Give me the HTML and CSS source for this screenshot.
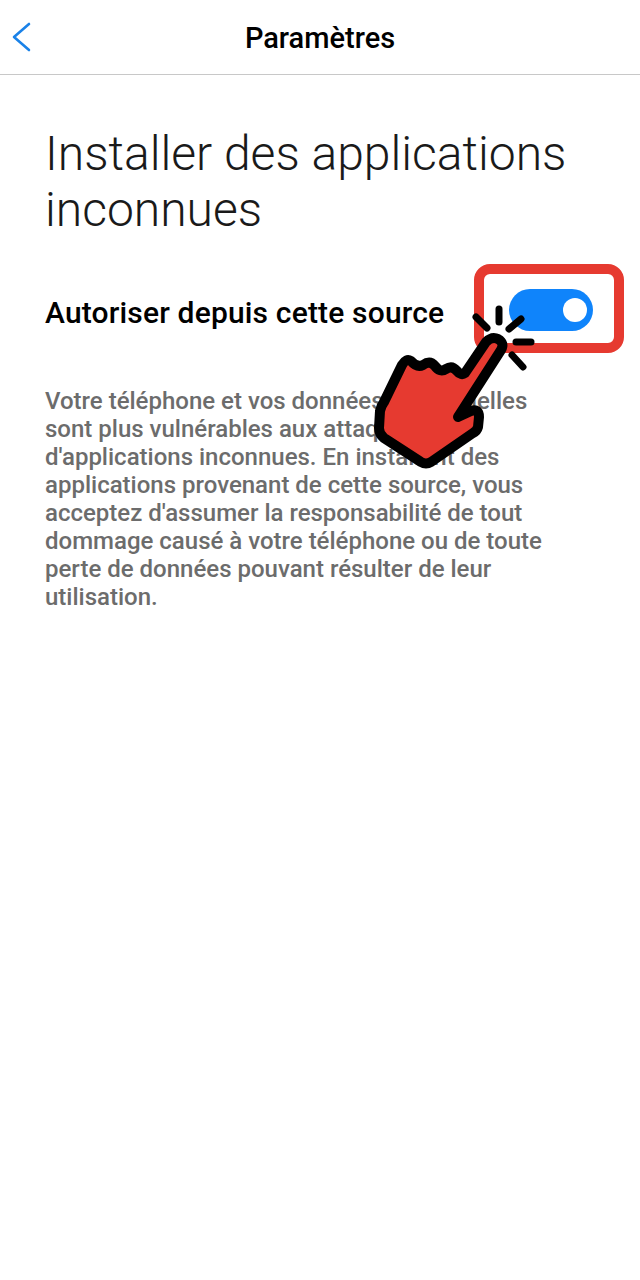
FILE: index.html
```html
<!DOCTYPE html>
<html lang="fr">
<head>
<meta charset="utf-8">
<title>Paramètres</title>
<link rel="stylesheet" href="styles.css">
</head>
<body>
<div class="page">
  <header class="topbar">
    <svg class="back" width="20" height="30" viewBox="0 0 20 30" aria-hidden="true"><path d="M18 2 L3 15 L18 28" fill="none" stroke="#1a82e8" stroke-width="2.6" stroke-linecap="round" stroke-linejoin="round"/></svg>
    <h1 class="topbar-title">Paramètres</h1>
  </header>
  <main class="content">
    <h2 class="title">Installer des applications inconnues</h2>
    <div class="setting">
      <span class="setting-label">Autoriser depuis cette source</span>
      <span class="toggle"><span class="knob"></span></span>
    </div>
    <p class="desc">Votre téléphone et vos données personnelles sont plus vulnérables aux attaques d'applications inconnues. En installant des applications provenant de cette source, vous acceptez d'assumer la responsabilité de tout dommage causé à votre téléphone ou de toute perte de données pouvant résulter de leur utilisation.</p>
  </main>
  <svg class="annotation" width="640" height="480" viewBox="0 0 640 480" aria-hidden="true">
    <rect x="479" y="269" width="140" height="79" rx="11" fill="none" stroke="#e63a30" stroke-width="10"/>
    <g fill="none" stroke="#000" stroke-width="7" stroke-linecap="round">
      <path d="M476 317 L487 328"/>
      <path d="M499 309 L499 322"/>
      <path d="M521 319 L509 329"/>
      <path d="M516 342 L531 342"/>
      <path d="M512 355 L523 367"/>
    </g>
    <path d="M486 342 Q492 336 498 339 Q505 343 501 350 L458 417 L471 411 Q479 408 479 417 L478 427 Q477 431 473 433 L431 462 Q426 465 421 462 L384 438 Q379 434 379 428 L380 411 Q381 406 384 402 L402 365 Q406 358 411 361 Q417 368 423 365 Q430 360 435 366 Q440 373 446 369 Q452 365 457 371 Q461 376 465 373 Z" fill="#e63a30" stroke="#000" stroke-width="10" stroke-linejoin="round" stroke-linecap="round"/>
  </svg>
</div>
</body>
</html>
```
FILE: styles.css
```css
* { box-sizing: border-box; }
html, body { margin: 0; padding: 0; background: #fff; }
body { font-family: Roboto, "Noto Sans", sans-serif; }
.page { position: relative; width: 640px; height: 1280px; overflow: hidden; }
.topbar {
  height: 75px;
  padding-top: 1px;
  display: flex;
  align-items: center;
  justify-content: center;
  border-bottom: 1px solid #c8c8c8;
  position: relative;
}
.back { position: absolute; left: 11px; top: 22px; }
.topbar-title { margin: 0; font-size: 29px; font-weight: 500; color: #000; }
.content { padding: 51px 45px 0 45px; }
.title {
  margin: 0;
  font-size: 48px;
  font-weight: 300;
  line-height: 56px;
  color: #1a1a1a;
}
.setting {
  margin-top: 44px;
  height: 60px;
  display: flex;
  align-items: center;
  justify-content: space-between;
  padding-right: 2px;
}
.setting-label { font-size: 30px; font-weight: 500; color: #000; letter-spacing: 0.17px; }
.toggle {
  width: 84px;
  height: 42px;
  margin-bottom: 4px;
  border-radius: 21px;
  background: #0f84fb;
  display: flex;
  align-items: center;
  justify-content: flex-end;
  padding-right: 6px;
}
.knob { width: 24px; height: 24px; border-radius: 50%; background: #fff; }
.desc {
  margin: 45px 0 0 0;
  width: 510px;
  font-size: 24px;
  font-weight: 500;
  line-height: 28px;
  color: #6c6c6c;
}
.annotation { position: absolute; left: 0; top: 0; }
```
